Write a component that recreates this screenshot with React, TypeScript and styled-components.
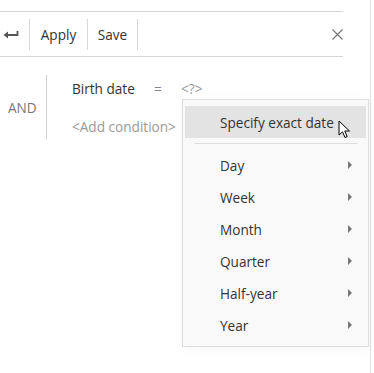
import React from "react";
import styled, { createGlobalStyle } from "styled-components";

const GlobalStyle = createGlobalStyle`
  html, body {
    margin: 0;
    padding: 0;
    background: #ffffff;
  }
  body {
    font-family: "Open Sans", "Noto Sans", sans-serif;
    font-size: 13.6px;
    color: #333;
  }
`;

const Page = styled.div`
  position: relative;
  width: 371px;
  height: 373px;
  padding-top: 11px;
  box-sizing: border-box;
  border-right: 1px solid #e2e2e2;
`;

const Toolbar = styled.div`
  display: flex;
  align-items: center;
  width: 343px;
  height: 44px;
  border-top: 1px solid #d4d4d4;
  border-bottom: 1px solid #d4d4d4;
`;

const ToolButton = styled.div<{ $width: number; $start?: boolean }>`
  display: flex;
  align-items: center;
  justify-content: ${(p) => (p.$start ? "flex-start" : "center")};
  padding-left: ${(p) => (p.$start ? "3px" : "0")};
  box-sizing: border-box;
  width: ${(p) => p.$width}px;
  height: 31px;
  border-right: 1px solid #d8d8d8;
  color: #333;
  cursor: pointer;
`;

const Spacer = styled.div`
  flex: 1;
`;

const CloseButton = styled.div`
  display: flex;
  align-items: center;
  justify-content: center;
  width: 12px;
  height: 12px;
`;

const Body = styled.div`
  display: flex;
  margin-top: 18px;
`;

const Group = styled.div`
  display: flex;
  align-items: center;
  width: 47px;
  border-right: 1px solid #cfcfcf;
  color: #777;
  box-sizing: border-box;
  padding-left: 8px;
`;

const Conditions = styled.div`
  display: flex;
  flex-direction: column;
  gap: 18px;
  padding: 4px 0 2px 25px;
`;

const Condition = styled.div`
  display: flex;
  align-items: center;
  height: 20px;
  line-height: 20px;
`;

const Field = styled.span`
  color: #333;
  width: 82px;
`;

const Operator = styled.span`
  color: #888;
  width: 27px;
`;

const Placeholder = styled.span`
  color: #9a9a9a;
`;

const Menu = styled.div`
  position: absolute;
  left: 182px;
  top: 99px;
  width: 187px;
  box-sizing: border-box;
  padding: 6px 2px 5px;
  background: #f9f9f9;
  border: 1px solid #dcdcdc;
  box-shadow: 2px 2px 14px rgba(0, 0, 0, 0.04);
`;

const MenuItem = styled.div<{ $active?: boolean }>`
  display: flex;
  align-items: center;
  height: 32px;
  padding-left: 35px;
  padding-right: 14px;
  background: ${(p) => (p.$active ? "#e3e3e3" : "transparent")};
  color: #333;
`;

const Label = styled.span`
  flex: 1;
`;

const Arrow = styled.span`
  width: 0;
  height: 0;
  border-top: 4px solid transparent;
  border-bottom: 4px solid transparent;
  border-left: 4px solid #777;
`;

const Divider = styled.div`
  height: 1px;
  margin: 5px 9px 5px 10px;
  background: #dddddd;
`;

const Cursor = styled.svg`
  position: absolute;
  left: 338px;
  top: 120px;
`;

const periods = ["Day", "Week", "Month", "Quarter", "Half-year", "Year"];

const App: React.FC = () => {
  return (
    <>
      <GlobalStyle />
      <Page>
        <Toolbar>
          <ToolButton $width={30} $start>
            <svg width="16" height="10" viewBox="0 0 16 10">
              <path d="M14.5 2 V6 H3" stroke="#555" strokeWidth="1.8" fill="none" />
              <path d="M0.5 6 L5 2.5 V9.5 Z" fill="#555" />
            </svg>
          </ToolButton>
          <ToolButton $width={58}>Apply</ToolButton>
          <ToolButton $width={50}>Save</ToolButton>
          <Spacer />
          <CloseButton>
            <svg width="11" height="11" viewBox="0 0 11 11">
              <path d="M0.5 0.5 L10.5 10.5 M10.5 0.5 L0.5 10.5" stroke="#777" strokeWidth="1.2" />
            </svg>
          </CloseButton>
        </Toolbar>
        <Body>
          <Group>AND</Group>
          <Conditions>
            <Condition>
              <Field>Birth date</Field>
              <Operator>=</Operator>
              <Placeholder>&lt;?&gt;</Placeholder>
            </Condition>
            <Condition>
              <Placeholder>&lt;Add condition&gt;</Placeholder>
            </Condition>
          </Conditions>
        </Body>
        <Menu>
          <MenuItem $active>
            <Label>Specify exact date</Label>
          </MenuItem>
          <Divider />
          {periods.map((p) => (
            <MenuItem key={p}>
              <Label>{p}</Label>
              <Arrow />
            </MenuItem>
          ))}
        </Menu>
        <Cursor width="14" height="20" viewBox="0 0 14 20">
          <path
            d="M1 1 L1 15 L4.5 11.8 L7 17.5 L9.2 16.6 L6.8 11 L11.5 11 Z"
            fill="#fff"
            stroke="#000"
            strokeWidth="1"
            strokeLinejoin="round"
          />
        </Cursor>
      </Page>
    </>
  );
};

export default App;
